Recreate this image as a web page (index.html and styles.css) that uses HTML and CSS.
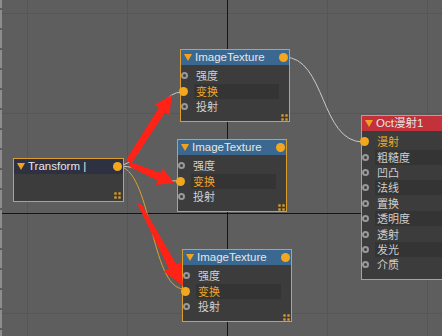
FILE: index.html
```html
<!DOCTYPE html>
<html lang="zh">
<head>
    <meta charset="UTF-8">
    <title>节点编辑器</title>
    <link rel="stylesheet" href="styles.css">
</head>
<body>
    <div class="app">
        <div class="ruler"></div>

        <!-- 节点视图 -->
        <div class="view">
            <svg class="layer" viewBox="2 0 440 336" width="440" height="336">
                <line class="axis" x1="227.5" y1="0" x2="227.5" y2="336" />
                <line class="axis" x1="0" y1="213.5" x2="442" y2="213.5" />
                <path class="wire" d="M284,57 C326,57 320,142 363,142" />
                <path class="wire" d="M117,166 C150,166 150,92 182,92" />
                <path class="wire" d="M117,166 C148,166 148,181 178,181" />
                <path class="wire gold" d="M117,166 C152,166 150,289 184,289" />
            </svg>

            <div class="node n-tex1">
                <div class="head">
                    <span class="tri"></span><span class="title">ImageTexture</span><span class="port"></span>
                </div>
                <div class="rows">
                    <div class="row"><span class="pin"></span><span class="lbl">强度</span></div>
                    <div class="row on"><span class="pin"></span><span class="lbl">变换</span></div>
                    <div class="row"><span class="pin"></span><span class="lbl">投射</span></div>
                </div>
                <div class="foot"><svg class="grip" viewBox="0 0 7 7"><rect x="0" y="0" width="3" height="3"/><rect x="4" y="0" width="3" height="3"/><rect x="0" y="4" width="3" height="3"/><rect x="4" y="4" width="3" height="3"/></svg></div>
            </div>

            <div class="node n-tex2">
                <div class="head">
                    <span class="tri"></span><span class="title">ImageTexture</span><span class="port"></span>
                </div>
                <div class="rows">
                    <div class="row"><span class="pin"></span><span class="lbl">强度</span></div>
                    <div class="row on"><span class="pin"></span><span class="lbl">变换</span></div>
                    <div class="row"><span class="pin"></span><span class="lbl">投射</span></div>
                </div>
                <div class="foot"><svg class="grip" viewBox="0 0 7 7"><rect x="0" y="0" width="3" height="3"/><rect x="4" y="0" width="3" height="3"/><rect x="0" y="4" width="3" height="3"/><rect x="4" y="4" width="3" height="3"/></svg></div>
            </div>

            <div class="node n-tex3">
                <div class="head">
                    <span class="tri"></span><span class="title">ImageTexture</span><span class="port"></span>
                </div>
                <div class="rows">
                    <div class="row"><span class="pin"></span><span class="lbl">强度</span></div>
                    <div class="row on"><span class="pin"></span><span class="lbl">变换</span></div>
                    <div class="row"><span class="pin"></span><span class="lbl">投射</span></div>
                </div>
                <div class="foot"><svg class="grip" viewBox="0 0 7 7"><rect x="0" y="0" width="3" height="3"/><rect x="4" y="0" width="3" height="3"/><rect x="0" y="4" width="3" height="3"/><rect x="4" y="4" width="3" height="3"/></svg></div>
            </div>

            <div class="node n-transform">
                <div class="head">
                    <span class="tri"></span><span class="title">Transform |</span><span class="port"></span>
                </div>
                <div class="body">
                    <svg class="grip" viewBox="0 0 7 7"><rect x="0" y="0" width="3" height="3"/><rect x="4" y="0" width="3" height="3"/><rect x="0" y="4" width="3" height="3"/><rect x="4" y="4" width="3" height="3"/></svg>
                </div>
            </div>

            <div class="node n-oct">
                <div class="head">
                    <span class="tri"></span><span class="title">Oct漫射1</span>
                </div>
                <div class="rows">
                    <div class="row on"><span class="pin"></span><span class="lbl">漫射</span></div>
                    <div class="row"><span class="pin"></span><span class="lbl">粗糙度</span></div>
                    <div class="row"><span class="pin"></span><span class="lbl">凹凸</span></div>
                    <div class="row"><span class="pin"></span><span class="lbl">法线</span></div>
                    <div class="row"><span class="pin"></span><span class="lbl">置换</span></div>
                    <div class="row"><span class="pin"></span><span class="lbl">透明度</span></div>
                    <div class="row"><span class="pin"></span><span class="lbl">透射</span></div>
                    <div class="row"><span class="pin"></span><span class="lbl">发光</span></div>
                    <div class="row"><span class="pin"></span><span class="lbl">介质</span></div>
                </div>
            </div>

            <!-- 红色标注箭头 -->
            <svg class="layer marks" viewBox="2 0 440 336" width="440" height="336">
                <polygon points="126,160 159,107.5 154.6,104.8 172,95 169.4,115 165,112.5 131,164" />
                <polygon points="130,162 160.8,173 162.8,168.2 174,183 155.8,185 157.6,180.4 130,167" />
                <polygon points="137,203 168.8,268.8 163.8,271.4 183,286 181.2,262 176.4,264.6 142,205" />
            </svg>
        </div>
    </div>
</body>
</html>
```

FILE: styles.css
```css
body {
    margin: 0;
    background: #5e5e5e;
    font-family: "Liberation Sans", "Noto Sans CJK SC", sans-serif;
}

.app {
    display: flex;
    width: 442px;
    height: 336px;
    overflow: hidden;
}

/* 左侧刻度条 */
.ruler {
    width: 2px;
    background: repeating-linear-gradient(to bottom, #5e5e5e 0 2px, #8d8d8d 2px 20px);
    background-position: 0 8px;
}

.view {
    position: relative;
    flex: 1;
    background-color: #5e5e5e;
    background-image:
        linear-gradient(to right, #565656 1px, transparent 1px),
        linear-gradient(to bottom, #565656 1px, transparent 1px);
    background-size: 100px 100px;
    background-position: 25px 13px;
}

.layer {
    position: absolute;
    left: 0;
    top: 0;
}

.axis {
    stroke: #151515;
    stroke-width: 1;
}

.wire {
    fill: none;
    stroke: #c9c9c9;
    stroke-width: 1;
}

    .wire.gold {
        stroke: #d9a12e;
    }

.marks polygon {
    fill: #ff2216;
}

/* 节点 */
.node {
    position: absolute;
    box-sizing: border-box;
    border: 1px solid #dc9d2c;
    background: #3c3c3c;
    display: flex;
    flex-direction: column;
}

.n-tex1 { left: 178px; top: 49px; width: 110px; height: 73px; }
.n-tex2 { left: 175px; top: 139px; width: 110px; height: 73px; }
.n-tex3 { left: 180px; top: 249px; width: 110px; height: 73px; }
.n-transform { left: 11px; top: 158px; width: 111px; height: 44px; }
.n-oct { left: 359px; top: 115px; width: 100px; height: 165px; }

.head {
    display: flex;
    align-items: center;
    height: 15px;
    background: #3b6890;
    color: #e6e6e6;
    font-size: 11.5px;
}

.n-transform .head {
    background: #2e3141;
}

.n-oct .head {
    background: #c3323a;
}

.tri {
    width: 0;
    height: 0;
    margin-left: 3px;
    border-left: 4px solid transparent;
    border-right: 4px solid transparent;
    border-top: 7px solid #f2a21f;
}

.title {
    margin-left: 3px;
    line-height: 15px;
    white-space: nowrap;
}

.port {
    width: 9px;
    height: 9px;
    margin-left: auto;
    margin-right: 1px;
    border-radius: 50%;
    background: #f3a71e;
}

.rows {
    padding-top: 3px;
}

.row {
    display: flex;
    align-items: center;
    height: 15.4px;
    color: #cfcfcf;
    font-size: 11px;
}

.pin {
    box-sizing: border-box;
    width: 7px;
    height: 7px;
    margin-left: 0;
    border: 2px solid #999;
    border-radius: 50%;
}

.row.on .pin {
    width: 9px;
    height: 9px;
    margin-left: -2px;
    border: none;
    background: #f3a71e;
}

.lbl {
    flex: 1;
    margin: 0 10px 0 6px;
    padding-left: 2px;
    line-height: 15px;
    font-family: "Noto Sans CJK SC", sans-serif;
}

.row:nth-child(even) .lbl {
    background: #343434;
}

.row.on .lbl {
    color: #f0a52a;
}

.foot {
    flex: 1;
    display: flex;
    justify-content: flex-end;
    align-items: flex-end;
    padding: 0 1px 1px 0;
}

.body {
    flex: 1;
    display: flex;
    justify-content: flex-end;
    align-items: flex-end;
    padding: 0 2px 2px 0;
}

.grip {
    width: 7px;
    height: 7px;
}

    .grip rect {
        fill: #d79a2c;
        stroke: #3c3c3c;
        stroke-width: 0.6;
    }
```
